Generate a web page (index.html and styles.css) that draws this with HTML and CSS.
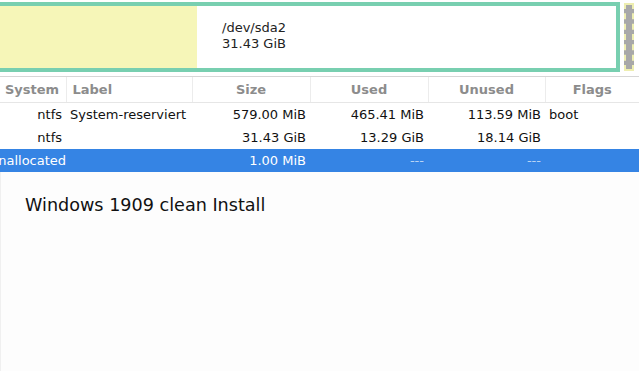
FILE: index.html
```html
<!DOCTYPE html>
<html lang="de">
<head>
    <meta charset="UTF-8">
    <title>GParted</title>
    <link rel="stylesheet" href="styles.css">
</head>
<body>
    <div class="disk-map">
        <div class="part">
            <div class="part-used"></div>
            <div class="part-info">
                /dev/sda2<br>
                31.43 GiB
            </div>
        </div>
        <div class="unalloc"></div>
    </div>

    <div class="tree">
        <table class="parts">
            <colgroup>
                <col class="c-fs">
                <col class="c-label">
                <col class="c-size">
                <col class="c-used">
                <col class="c-unused">
                <col class="c-flags">
            </colgroup>
            <tr class="head">
                <th class="first">System</th>
                <th class="left">Label</th>
                <th>Size</th>
                <th>Used</th>
                <th>Unused</th>
                <th>Flags</th>
            </tr>
            <tr>
                <td class="right">ntfs</td>
                <td>System-reserviert</td>
                <td class="right">579.00 MiB</td>
                <td class="right">465.41 MiB</td>
                <td class="right">113.59 MiB</td>
                <td>boot</td>
            </tr>
            <tr>
                <td class="right">ntfs</td>
                <td></td>
                <td class="right">31.43 GiB</td>
                <td class="right">13.29 GiB</td>
                <td class="right">18.14 GiB</td>
                <td></td>
            </tr>
            <tr class="selected">
                <td class="clip">unallocated</td>
                <td></td>
                <td class="right">1.00 MiB</td>
                <td class="right dim">---</td>
                <td class="right dim">---</td>
                <td></td>
            </tr>
        </table>
    </div>

    <div class="notes">
        Windows 1909 clean Install
    </div>
</body>
</html>
```

FILE: styles.css
```css
body {
    margin: 0;
    width: 639px;
    height: 371px;
    overflow: hidden;
    background-color: #fdfdfd;
    font-family: "DejaVu Sans", sans-serif;
    font-size: 13px;
    color: #111;
}
.disk-map {
    display: flex;
    height: 76px;
    padding-top: 2px;
    box-sizing: border-box;
    background-color: #fff;
}
.part {
    display: flex;
    width: 620px;
    height: 70px;
    box-sizing: border-box;
    border: 4px solid #78cfb0;
    border-left: none;
}
.part-used {
    width: 197px;
    background-color: #f6f6b8;
}
.part-info {
    padding: 14px 0 0 25px;
    line-height: 16px;
    color: #222;
}
.unalloc {
    width: 10px;
    height: 68px;
    margin: 1px 0 0 4px;
    box-sizing: border-box;
    background-color: #a8a8a8;
    border: 2px dashed #eeeeb0;
}
.tree {
    border-top: 1px solid #d6d6d6;
    background-color: #fff;
}
.parts {
    width: 639px;
    border-collapse: collapse;
    table-layout: fixed;
}
.c-fs { width: 66px; }
.c-label { width: 126px; }
.c-size { width: 118px; }
.c-used { width: 118px; }
.c-unused { width: 117px; }
.c-flags { width: 94px; }
.parts th {
    height: 25px;
    padding: 0 4px;
    font-weight: bold;
    color: #8c8c8c;
    text-align: center;
    border-left: 1px solid #ececec;
    border-bottom: 1px solid #e6e6e6;
    white-space: nowrap;
    overflow: hidden;
}
.parts th.first {
    border-left: none;
    text-align: left;
    padding-left: 5px;
}
.parts td {
    height: 23px;
    padding: 0 4px;
    white-space: nowrap;
    overflow: hidden;
}
.parts .right {
    text-align: right;
}
.parts .left {
    text-align: left;
    padding-left: 6px;
}
.parts td.clip {
    padding: 0;
    text-indent: -10px;
}
.selected {
    background-color: #3584e4;
    color: #fff;
}
.selected .dim {
    color: #b9d4f5;
}
.notes {
    height: 199px;
    box-sizing: border-box;
    padding: 23px 0 0 24px;
    font-size: 17.6px;
    color: #111;
    border-left: 1px solid #f0f0f0;
}
```
